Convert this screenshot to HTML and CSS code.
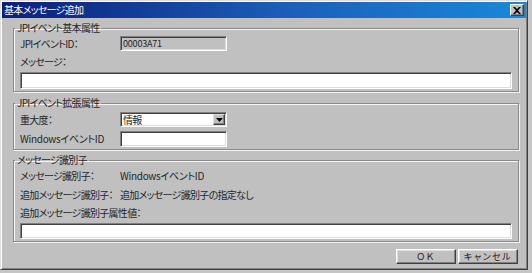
FILE: index.html
```html
<!DOCTYPE html>
<html lang="ja">
<head>
    <meta charset="UTF-8">
    <title>基本メッセージ追加</title>
    <link rel="stylesheet" href="styles.css">
</head>
<body>
<div class="window">
  <div class="titlebar">
    <span class="title">基本メッセージ追加</span>
    <span class="closebtn">
      <svg width="8" height="7" viewBox="0 0 8 7"><path d="M0 0h2l2 2 2-2h2L5 3.5 8 7H6L4 5 2 7H0l3-3.5z" fill="#000"/></svg>
    </span>
  </div>

  <div class="content">
    <fieldset class="group g1">
      <legend>JPIイベント基本属性</legend>
      <div class="row r-id">
        <span class="label">JPIイベントID：</span>
        <span class="field readonly">00003A71</span>
      </div>
      <div class="row r-msglabel">
        <span class="label">メッセージ：</span>
      </div>
      <input class="textbox wide" type="text">
    </fieldset>

    <fieldset class="group g2">
      <legend>JPIイベント拡張属性</legend>
      <div class="row r-sev">
        <span class="label">重大度：</span>
        <span class="field select">
          <span class="selval">情報</span>
          <span class="dropbtn"><svg width="7" height="4" viewBox="0 0 7 4"><path d="M0 0h7L3.5 4z" fill="#000"/></svg></span>
        </span>
      </div>
      <div class="row r-win">
        <span class="label latin">WindowsイベントID</span>
        <input class="textbox short" type="text">
      </div>
    </fieldset>

    <fieldset class="group g3">
      <legend>メッセージ識別子</legend>
      <div class="row r-t1">
        <span class="label">メッセージ識別子：</span>
        <span class="value latin">WindowsイベントID</span>
      </div>
      <div class="row r-t2">
        <span class="label">追加メッセージ識別子：</span>
        <span class="value">追加メッセージ識別子の指定なし</span>
      </div>
      <div class="row r-t3">
        <span class="label">追加メッセージ識別子属性値：</span>
      </div>
      <input class="textbox wide thin" type="text">
    </fieldset>

    <div class="buttons">
      <button class="btn">ＯＫ</button>
      <button class="btn">キャンセル</button>
    </div>
  </div>
</div>
</body>
</html>
```

FILE: styles.css
```css
body {
  margin: 0;
  background: #c6c6c6;
  font-family: "Noto Sans CJK JP", "Noto Sans", sans-serif;
  font-size: 10px;
  line-height: 12px;
  letter-spacing: -0.7px;
  color: #262626;
  font-feature-settings: "palt";
}

.window {
  width: 524px;
  height: 266px;
  background: #c0c0c0;
  border: 1px solid;
  border-color: #dfdfdf #404040 #404040 #dfdfdf;
  box-shadow: inset 1px 1px 0 #fff, inset -1px -1px 0 #808080;
  padding: 1px;
  display: flex;
  flex-direction: column;
}

.titlebar {
  height: 16px;
  background: linear-gradient(90deg, #0a1f7c, #1c5fb8 55%, #1a88d8);
  display: flex;
  align-items: center;
  justify-content: space-between;
  padding: 0 2px 0 2px;
}

.title {
  color: #fff;
}

.closebtn {
  width: 12px;
  height: 10px;
  background: #c0c0c0;
  border: 1px solid;
  border-color: #fff #404040 #404040 #fff;
  box-shadow: inset -1px -1px 0 #808080;
  display: flex;
  align-items: center;
  justify-content: center;
}

.content {
  padding: 4px 7px 0 11px;
}

.group {
  margin: 0;
  padding: 0 6px 2px 6px;
  border: 1px solid #8a8a8a;
  box-shadow: inset 1px 1px 0 #f4f4f4, 1px 1px 0 #f4f4f4;
  min-width: 0;
}

.group legend {
  padding: 0 2px;
  margin-left: -5px;
  line-height: 12px;
}

.g2 { margin-top: 5px; }
.g3 { margin-top: 4px; }

.row {
  display: flex;
  align-items: center;
  white-space: nowrap;
}

.label {
  width: 100px;
  flex-shrink: 0;
}

.latin {
  letter-spacing: -0.3px;
}

.r-id { margin-top: 2px; height: 15px; }
.r-msglabel { margin-top: 5px; height: 12px; }
.g1 .textbox { margin-top: 4px; }

.r-sev { margin-top: 3px; height: 15px; }
.r-win { margin-top: 4px; height: 16px; }

.r-t1 { margin-top: 4px; height: 12px; }
.r-t2 { margin-top: 7px; height: 12px; }
.r-t3 { margin-top: 6px; height: 12px; }
.g3 .textbox { margin-top: 4px; }

.field,
.textbox {
  box-sizing: border-box;
  border: 1px solid;
  border-color: #808080 #fff #fff #808080;
  box-shadow: inset 1px 1px 0 #404040, inset -1px -1px 0 #dcdcdc;
  font: inherit;
  margin: 0;
  outline: none;
}

.field {
  width: 107px;
  height: 15px;
  display: flex;
  align-items: center;
  padding-left: 2px;
}

.readonly {
  background: #c0c0c0;
  font-size: 9px;
  letter-spacing: -0.2px;
}

.select {
  background: #fff;
  justify-content: space-between;
  padding-right: 1px;
}

.dropbtn {
  width: 12px;
  height: 11px;
  box-sizing: border-box;
  background: #c0c0c0;
  border: 1px solid;
  border-color: #dfdfdf #404040 #404040 #dfdfdf;
  box-shadow: inset -1px -1px 0 #808080;
  display: flex;
  align-items: center;
  justify-content: center;
}

.textbox {
  display: block;
  background: #fff;
  height: 17px;
  padding: 0 2px;
}

.wide { width: 100%; }
.thin { height: 16px; }

.short {
  width: 107px;
  height: 16px;
}

.buttons {
  display: flex;
  justify-content: flex-end;
  gap: 2px;
  margin-top: 7px;
  padding-right: 1px;
}

.btn {
  width: 60px;
  height: 15px;
  padding: 0;
  background: #c0c0c0;
  border: 1px solid;
  border-color: #fff #404040 #404040 #fff;
  box-shadow: inset -1px -1px 0 #808080, inset 1px 1px 0 #dfdfdf;
  font: inherit;
  font-size: 9px;
  letter-spacing: 1.5px;
  color: #202020;
}
```
